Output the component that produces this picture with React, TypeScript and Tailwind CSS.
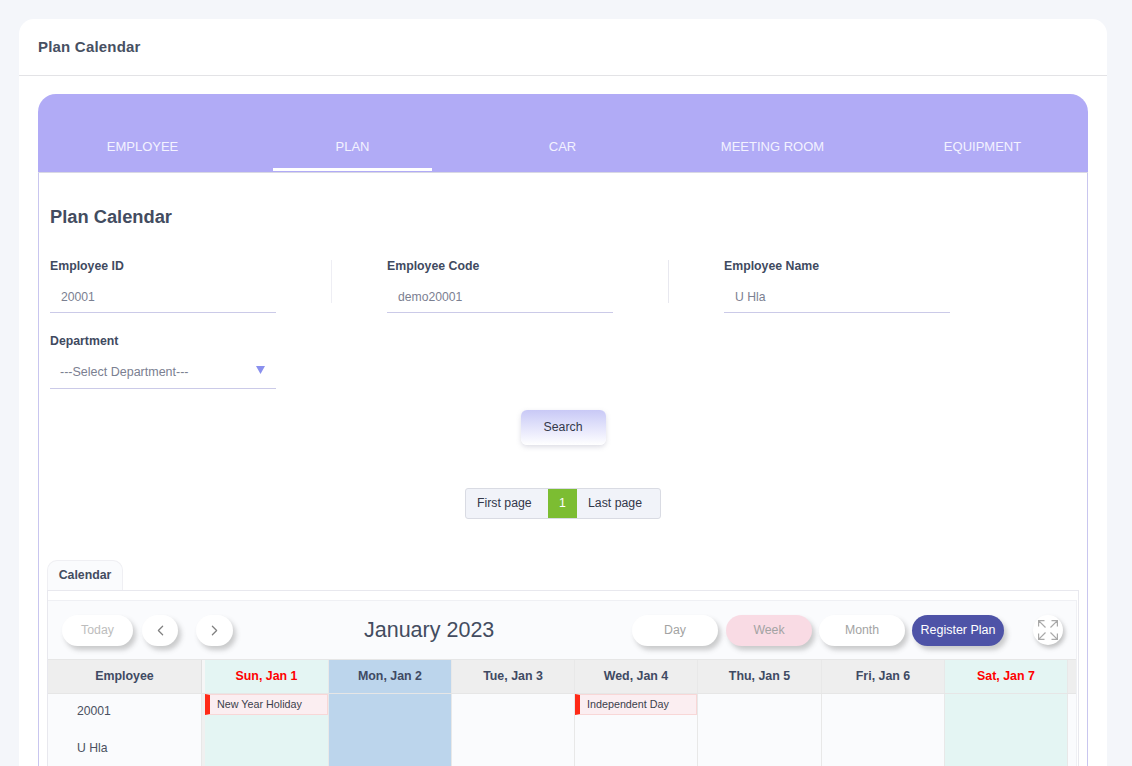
import { ChevronLeft, ChevronRight } from "lucide-react";

const tabs = ["EMPLOYEE", "PLAN", "CAR", "MEETING ROOM", "EQUIPMENT"];

const days = [
  { label: "Sun, Jan 1", width: "w-[124px]", head: "bg-[#e4f5f3] text-[#ff0000]", body: "bg-[#e4f5f3]", event: "New Year Holiday" },
  { label: "Mon, Jan 2", width: "w-[123px]", head: "bg-[#bcd5ec] text-[#3f4a63]", body: "bg-[#bcd5ec]" },
  { label: "Tue, Jan 3", width: "w-[123px]", head: "bg-[#eeeeee] text-[#3f4a63]", body: "bg-[#fafbfd]" },
  { label: "Wed, Jan 4", width: "w-[123px]", head: "bg-[#eeeeee] text-[#3f4a63]", body: "bg-[#fafbfd]", event: "Independent Day" },
  { label: "Thu, Jan 5", width: "w-[124px]", head: "bg-[#eeeeee] text-[#3f4a63]", body: "bg-[#fafbfd]" },
  { label: "Fri, Jan 6", width: "w-[123px]", head: "bg-[#eeeeee] text-[#3f4a63]", body: "bg-[#fafbfd]" },
  { label: "Sat, Jan 7", width: "w-[123px]", head: "bg-[#e4f5f3] text-[#ff0000]", body: "bg-[#e4f5f3]" },
];

function Field({ label, value }: { label: string; value: string }) {
  return (
    <div className="w-[226px]">
      <div className="h-[14px] text-[12.3px] leading-[14px] font-bold text-[#3f4a5f]">{label}</div>
      <div className="mt-[9px] h-[31px] border-b border-[#cbcae8] pl-[11px] pt-[6px] text-[12.2px] leading-[18px] text-[#7b8091]">
        {value}
      </div>
    </div>
  );
}

function PillButton({ label, className }: { label: string; className: string }) {
  return (
    <button className={`h-[31px] rounded-full shadow-[3px_4px_5px_rgba(90,90,90,0.3)] ${className}`}>
      {label}
    </button>
  );
}

export default function App() {
  return (
    <div className="h-[766px] overflow-hidden bg-[#f4f6fa] pl-[19px] pr-[25px] pt-[19px] font-['Liberation_Sans',Arial,sans-serif]">
      <div className="rounded-t-[15px] bg-white pb-10">
        {/* Page title */}
        <div className="flex h-[57px] items-center border-b border-[#e3e3e6] pt-[1px] pl-[19px] text-[15px] tracking-[0.2px] font-bold text-[#475062]">
          Plan Calendar
        </div>

        <div className="mx-[19px] mt-[18px]">
          {/* Tabs */}
          <div className="flex h-[79px] items-end rounded-t-[18px] border-b border-[#d8d8e4] bg-[#b1abf6]">
            {tabs.map((tab) => (
              <div key={tab} className="flex h-[40px] w-[210px] justify-center pr-[1px]">
                <div
                  className={`flex h-[39px] w-[159px] justify-center pt-[7px] text-[13px] leading-[16px] text-[#f3f2ff] ${
                    tab === "PLAN" ? "border-b-[3px] border-white" : ""
                  }`}
                >
                  {tab}
                </div>
              </div>
            ))}
          </div>

          <div className="border-x border-[#c9c6ef] px-[11px] pt-[33px]">
            <h2 className="h-[22px] text-[18.3px] leading-[22px] font-bold text-[#434c60]">Plan Calendar</h2>

            {/* Filters */}
            <div className="mt-[31px] flex">
              <Field label="Employee ID" value="20001" />
              <div className="mx-[55px] mt-[1px] h-[43px] w-px bg-[#eeeef4]" />
              <Field label="Employee Code" value="demo20001" />
              <div className="mx-[55px] mt-[1px] h-[43px] w-px bg-[#e8e8ef]" />
              <Field label="Employee Name" value="U Hla" />
            </div>
            <div className="mt-[21px] w-[226px]">
              <div className="h-[14px] text-[12.3px] leading-[14px] font-bold text-[#3f4a5f]">Department</div>
              <div className="mt-[9px] flex h-[32px] items-start justify-between border-b border-[#cbcae8] pl-[10px] pr-[11px] pt-[7px] text-[12.5px] leading-[16px] text-[#7b8091]">
                <span>---Select Department---</span>
                <svg width="9" height="8" viewBox="0 0 9 8" className="mt-[2px]">
                  <path d="M0 0h9L4.5 8z" fill="#8a90ee" />
                </svg>
              </div>
            </div>

            <div className="mt-[21px] flex justify-center">
              <button className="h-[35px] w-[85px] rounded-[6px] bg-gradient-to-b from-[#c9c9f6] to-white text-[12.3px] text-[#33384a] shadow-[0_2px_5px_rgba(120,120,150,0.25)]">
                Search
              </button>
            </div>

            {/* Pager */}
            <div className="mt-[43px] flex justify-center">
              <div className="flex h-[31px] overflow-hidden rounded-[3px] border border-[#d9dbe3] bg-[#f1f3f9] text-[12.3px] text-[#33384a]">
                <span className="flex w-[82px] items-center pl-[11px]">First page</span>
                <span className="flex w-[29px] items-center justify-center bg-[#7cbd32] text-white">1</span>
                <span className="flex w-[83px] items-center pl-[11px]">Last page</span>
              </div>
            </div>

            {/* Calendar tab */}
            <div className="mt-[41px] ml-[-3px] w-[1032px]">
              <div className="flex h-[30px] w-[76px] items-center justify-center rounded-t-[10px] border border-b-0 border-[#efeff3] bg-[#fafbfd] text-[12.3px] font-bold text-[#434c60]">
                Calendar
              </div>
              <div className="border-x border-t border-[#e8e8ee] pt-[9px]">
                <div className="mr-px border-t border-r border-[#eff0f4] bg-[#fafbfd]">
                  {/* Toolbar */}
                  <div className="flex h-[58px] items-center pl-[14px] text-[12.3px]">
                    <PillButton label="Today" className="w-[71px] bg-white text-[#bdbdbd]" />
                    <button className="ml-[9px] flex h-[31px] w-[36px] items-center justify-center rounded-full bg-white text-[#808080] shadow-[3px_4px_5px_rgba(90,90,90,0.3)]">
                      <ChevronLeft size={17} strokeWidth={1.75} />
                    </button>
                    <button className="ml-[18px] flex h-[31px] w-[37px] items-center justify-center rounded-full bg-white text-[#808080] shadow-[3px_4px_5px_rgba(90,90,90,0.3)]">
                      <ChevronRight size={17} strokeWidth={1.75} />
                    </button>
                    <div className="ml-[131px] w-[268px] text-[21.5px] leading-[26px] text-[#434c60]">January 2023</div>
                    <PillButton label="Day" className="w-[86px] bg-white text-[#a3a3a3]" />
                    <PillButton label="Week" className="ml-[8px] w-[86px] bg-[#f9dbe4] text-[#a3a3a3]" />
                    <PillButton label="Month" className="ml-[7px] w-[86px] bg-white text-[#a3a3a3]" />
                    <PillButton label="Register Plan" className="ml-[7px] w-[92px] bg-[#4e53a7] text-[12.5px] text-white" />
                    <button className="ml-[29px] flex h-[30px] w-[30px] items-center justify-center rounded-full bg-white shadow-[2px_3px_4px_rgba(90,90,90,0.35)]">
                      <svg width="20" height="20" viewBox="0 0 20 20" fill="none" stroke="#a9a9a9" strokeWidth="1.2">
                        <path d="M0.6 6.5V0.6h5.9M0.6 0.6l6.9 6.9M13.5 0.6h5.9v5.9M19.4 0.6l-6.9 6.9M0.6 13.5v5.9h5.9M0.6 19.4l6.9-6.9M19.4 13.5v5.9h-5.9M19.4 19.4l-6.9-6.9" />
                      </svg>
                    </button>
                  </div>

                  {/* Grid head */}
                  <div className="flex h-[35px] border-y border-[#e6e6e6] bg-[#eeeeee] text-[12.4px] font-bold">
                    <div className="flex w-[154px] items-center justify-center border-r border-[#e0e0e0] text-[#3f4a63]">Employee</div>
                    <div className="w-[3px] bg-[#f6f6f6]" />
                    {days.map((d) => (
                      <div key={d.label} className={`flex items-center justify-center border-r border-[#e8e8e8] ${d.width} ${d.head}`}>
                        {d.label}
                      </div>
                    ))}
                  </div>

                  {/* Grid body */}
                  <div className="flex h-[90px]">
                    <div className="w-[154px] border-r border-[#e8e8e8] pl-[29px] text-[12.2px] text-[#4a5060]">
                      <div className="pt-[9px] leading-[16px]">20001</div>
                      <div className="pt-[21px] leading-[16px]">U Hla</div>
                    </div>
                    <div className="w-[3px] bg-[#f0f0f0]" />
                    {days.map((d) => (
                      <div key={d.label} className={`border-r border-[#e8e8e8] ${d.width} ${d.body}`}>
                        {d.event && (
                          <div className="flex h-[21px] items-center border border-l-[5px] border-[#f8d7d7] border-l-[#ff2a17] bg-[#fbeef1] pl-[7px] text-[10.75px] text-[#3b3f4c]">
                            {d.event}
                          </div>
                        )}
                      </div>
                    ))}
                  </div>
                </div>
              </div>
            </div>
          </div>
        </div>
      </div>
    </div>
  );
}
